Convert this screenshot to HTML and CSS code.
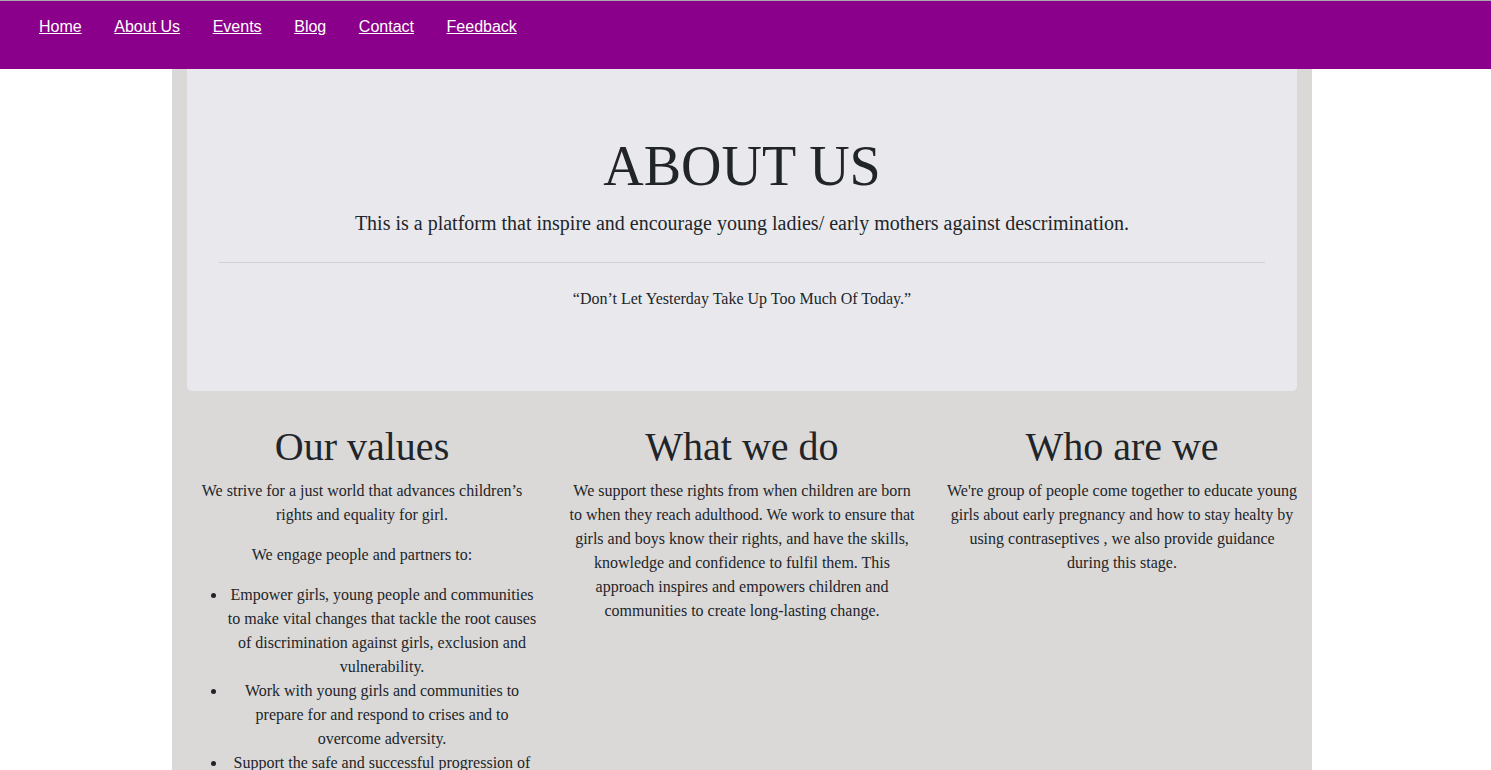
FILE: index.html
```html
<!DOCTYPE html>
<html lang="en">
<head>
<meta charset="utf-8">
<title>About Us</title>
<link rel="stylesheet" href="styles.css">
</head>
<body>
<nav class="topnav">
  <ul class="nav-list">
    <li><a href="#">Home</a></li>
    <li><a href="#">About Us</a></li>
    <li><a href="#">Events</a></li>
    <li><a href="#">Blog</a></li>
    <li><a href="#">Contact</a></li>
    <li><a href="#">Feedback</a></li>
  </ul>
</nav>
<main class="container">
  <section class="jumbotron">
    <h1 class="display">ABOUT US</h1>
    <p class="lead">This is a platform that inspire and encourage young ladies/ early mothers against descrimination.</p>
    <hr class="divider">
    <p class="quote">“Don’t Let Yesterday Take Up Too Much Of Today.”</p>
  </section>
  <div class="row">
    <div class="col">
      <h2 class="col-title">Our values</h2>
      <p>We strive for a just world that advances children’s rights and equality for girl.</p>
      <p>We engage people and partners to:</p>
      <ul class="values">
        <li>Empower girls, young people and communities to make vital changes that tackle the root causes of discrimination against girls, exclusion and vulnerability.</li>
        <li>Work with young girls and communities to prepare for and respond to crises and to overcome adversity.</li>
        <li>Support the safe and successful progression of girls from birth to adulthood.</li>
      </ul>
    </div>
    <div class="col">
      <h2 class="col-title">What we do</h2>
      <p>We support these rights from when children are born to when they reach adulthood. We work to ensure that girls and boys know their rights, and have the skills, knowledge and confidence to fulfil them. This approach inspires and empowers children and communities to create long-lasting change.</p>
    </div>
    <div class="col">
      <h2 class="col-title">Who are we</h2>
      <p>We're group of people come together to educate young girls about early pregnancy and how to stay healty by using contraseptives , we also provide guidance during this stage.</p>
    </div>
  </div>
</main>
</body>
</html>
```
FILE: styles.css
```css
* { box-sizing: border-box; }
html, body { margin: 0; padding: 0; }
body {
  background: #ffffff;
  color: #212529;
  font-family: "Liberation Serif", "Times New Roman", serif;
  font-size: 16px;
  line-height: 1.5;
}
.topnav {
  background: #8b008b;
  border-top: 1px solid #a8a8a8;
  height: 69px;
}
.nav-list {
  list-style: none;
  margin: 0;
  padding: 17px 0 0 39px;
  display: flex;
  gap: 32.6px;
}
.nav-list li { line-height: 18px; }
.nav-list a {
  color: #ffffff;
  font-family: "Liberation Sans", Arial, sans-serif;
  font-size: 16px;
  text-decoration: underline;
}
.container {
  width: 1140px;
  margin: 0 0 0 calc(50% - 573.5px);
  padding: 0 15px;
  background: #dbd9d8;
  min-height: 701px;
}
.jumbotron {
  background: #e9e9ed;
  border-radius: 0 0 5px 5px;
  padding: 64px 32px;
  margin-bottom: 32px;
  text-align: center;
}
.display {
  font-size: 56px;
  font-weight: 400;
  line-height: 1.2;
  margin: 0 0 8px;
}
.lead {
  font-size: 20px;
  font-weight: 300;
  line-height: 1.5;
  margin: 0 0 16px;
}
.divider {
  border: 0;
  border-top: 1px solid rgba(0, 0, 0, 0.1);
  margin: 24px 0;
  height: 0;
}
.quote { margin: 0 0 16px; }
.row {
  display: flex;
  margin: 0 -15px;
}
.col {
  width: 380px;
  padding: 0 15px;
  text-align: center;
}
.col-title {
  font-size: 40px;
  font-weight: 400;
  line-height: 1.2;
  margin: 0 0 8px;
}
.col p { margin: 0 0 16px; }
.values {
  margin: 0 0 16px;
  padding-left: 40px;
}
```
